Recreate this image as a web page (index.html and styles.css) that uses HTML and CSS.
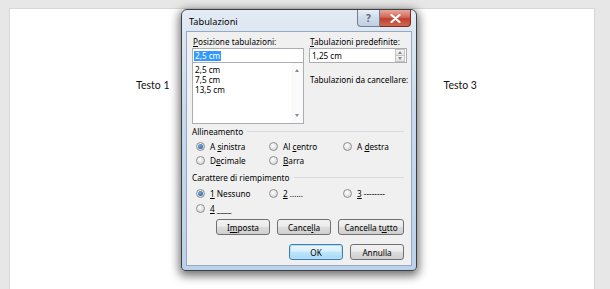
FILE: index.html
```html
<!DOCTYPE html>
<html lang="it">
<head>
    <meta charset="UTF-8">
    <title>Tabulazioni</title>
    <link rel="stylesheet" href="styles.css">
</head>
<body>
    <div class="workspace">
        <div class="page">
            <div class="doc-line">
                <span>Testo 1</span>
                <span>Testo 3</span>
            </div>
        </div>

        <div class="dialog">
            <div class="titlebar">
                <span class="title">Tabulazioni</span>
                <div class="caption-btns">
                    <span class="cap cap-help">?</span>
                    <span class="cap cap-close">
                        <svg width="11" height="9" viewBox="0 0 11 9"><path d="M1.5 1 L9.5 8 M9.5 1 L1.5 8" stroke="#fff" stroke-width="2.2" stroke-linecap="round"/></svg>
                    </span>
                </div>
            </div>

            <div class="client">
                <div class="top">
                    <div class="col-left">
                        <div class="label"><u>P</u>osizione tabulazioni:</div>
                        <div class="textbox"><span class="sel">2,5 cm</span></div>
                        <div class="listbox">
                            <div class="items">
                                <div>2,5 cm</div>
                                <div>7,5 cm</div>
                                <div>13,5 cm</div>
                            </div>
                            <div class="vscroll">
                                <span class="arrow up"></span>
                                <span class="arrow down"></span>
                            </div>
                        </div>
                    </div>
                    <div class="col-right">
                        <div class="label"><u>T</u>abulazioni predefinite:</div>
                        <div class="spin">
                            <span class="spin-value">1,25 cm</span>
                            <div class="spin-btns">
                                <span class="spin-btn"><span class="arrow up"></span></span>
                                <span class="spin-btn"><span class="arrow down"></span></span>
                            </div>
                        </div>
                        <div class="label clear-label">Tabulazioni da cancellare:</div>
                    </div>
                </div>

                <div class="group-head">Allineamento</div>
                <div class="radios">
                    <div class="radio checked"><span class="dot"></span><span>A <u>s</u>inistra</span></div>
                    <div class="radio"><span class="dot"></span><span>Al <u>c</u>entro</span></div>
                    <div class="radio"><span class="dot"></span><span>A <u>d</u>estra</span></div>
                    <div class="radio"><span class="dot"></span><span>D<u>e</u>cimale</span></div>
                    <div class="radio"><span class="dot"></span><span><u>B</u>arra</span></div>
                </div>

                <div class="group-head fill-head">Carattere di riempimento</div>
                <div class="radios fill">
                    <div class="radio checked"><span class="dot"></span><span><u>1</u> Nessuno</span></div>
                    <div class="radio"><span class="dot"></span><span><u>2</u> ......</span></div>
                    <div class="radio"><span class="dot"></span><span><u>3</u> --------</span></div>
                    <div class="radio"><span class="dot"></span><span><u>4</u> ____</span></div>
                </div>

                <div class="btn-row">
                    <span class="btn"><span>I<u>m</u>posta</span></span>
                    <span class="btn"><span>Cance<u>l</u>la</span></span>
                    <span class="btn wide"><span>Cancella t<u>u</u>tto</span></span>
                </div>
                <div class="btn-row last">
                    <span class="btn default">OK</span>
                    <span class="btn">Annulla</span>
                </div>
            </div>
        </div>
    </div>
</body>
</html>
```

FILE: styles.css
```css
body {
    margin: 0;
    background: #e7e7e7;
    font-family: "Noto Sans", sans-serif;
}

.workspace {
    position: relative;
    height: 289px;
    overflow: hidden;
    padding: 9px 0 0 10px;
    box-sizing: border-box;
}

.page {
    width: 584px;
    height: 290px;
    background: #ffffff;
    box-shadow: 0 0 0 1px #d8d8d8;
}

.doc-line {
    display: flex;
    gap: 274px;
    padding: 70px 0 0 126px;
    font-family: Lato, "Noto Sans", sans-serif;
    font-size: 10.5px;
    color: #111;
}

/* dialog window */
.dialog {
    position: absolute;
    left: 181px;
    top: 9px;
    width: 236px;
    height: 262px;
    box-sizing: border-box;
    border: 1px solid #3b4048;
    border-radius: 6px 6px 4px 4px;
    background: linear-gradient(#e3ebf4, #c8d9ec 40%, #bcd2ea);
    box-shadow: 0 3px 10px 2px rgba(0, 0, 0, 0.55);
    padding: 0 4px 4px;
    display: flex;
    flex-direction: column;
    font-size: 8.2px;
    color: #000;
}

.titlebar {
    height: 21px;
    display: flex;
    align-items: flex-start;
}

.title {
    padding: 5px 0 0 3px;
    font-size: 9.2px;
    color: #000;
}

.caption-btns {
    margin-left: auto;
    margin-right: 1px;
    display: flex;
}

.cap {
    height: 17px;
    display: flex;
    align-items: center;
    justify-content: center;
    box-sizing: border-box;
    border: 1px solid #6d7f95;
    border-top: none;
}

.cap-help {
    width: 23px;
    border-radius: 0 0 0 4px;
    background: linear-gradient(#e9eff6, #cfdbe9 50%, #bfcfe2);
    color: #5a6a7e;
    font-size: 10px;
    font-weight: bold;
}

.cap-close {
    width: 31px;
    border-left: none;
    border-color: #7a2b22;
    border-radius: 0 0 4px 0;
    background: linear-gradient(#e9a99b, #d0685a 45%, #bf3f2e 55%, #cf6a52);
}

.client {
    flex: 1;
    background: #f0f0f0;
    border: 1px solid #95a9c3;
    padding: 4px 4px 0 5px;
}

.label {
    height: 11px;
    line-height: 11px;
    padding-left: 1px;
    white-space: nowrap;
}

.top {
    display: flex;
    gap: 5px;
}

.col-left {
    width: 113px;
}

.col-right {
    width: 98px;
}

.textbox,
.spin {
    margin-top: 1px;
    height: 15px;
    box-sizing: border-box;
    border: 1px solid #abadb3;
    background: #fff;
    display: flex;
    align-items: center;
    padding-left: 1px;
}

.sel {
    background: #3399ff;
    color: #fff;
    line-height: 10px;
    padding: 0 1px;
}

.listbox {
    height: 61px;
    box-sizing: border-box;
    border: 1px solid #abadb3;
    border-top: none;
    background: #fff;
    display: flex;
}

.items {
    flex: 1;
    padding: 2px 0 0 2px;
    line-height: 10px;
}

.vscroll {
    width: 12px;
    display: flex;
    flex-direction: column;
    justify-content: space-between;
    align-items: center;
    padding: 6px 0 6px;
    background: #fafafa;
}

.arrow {
    width: 0;
    height: 0;
    border-left: 2.5px solid transparent;
    border-right: 2.5px solid transparent;
}

.arrow.up {
    border-bottom: 3px solid #8a8a8a;
}

.arrow.down {
    border-top: 3px solid #8a8a8a;
}

.spin-value {
    flex: 1;
    padding-left: 1px;
}

.spin-btns {
    width: 10px;
    height: 13px;
    margin-right: 1px;
    display: flex;
    flex-direction: column;
}

.spin-btn {
    flex: 1;
    display: flex;
    align-items: center;
    justify-content: center;
    border: 1px solid #c4c4c4;
    background: linear-gradient(#f6f6f6, #e2e2e2);
}

.spin-btn + .spin-btn {
    border-top: none;
}

.clear-label {
    margin-top: 11px;
}

/* groups */
.group-head {
    margin-top: 2px;
    height: 11px;
    line-height: 11px;
    display: flex;
    align-items: center;
    gap: 4px;
}

.group-head::after {
    content: "";
    flex: 1;
    border-top: 1px solid #d9dde2;
    margin-right: 3px;
}

.fill-head {
    margin-top: 5px;
}

.radios {
    margin-top: 2px;
    padding-left: 4px;
    display: grid;
    grid-template-columns: 73px 74px auto;
    grid-auto-rows: 14px;
}

.radios.fill {
    margin-top: 3px;
    grid-auto-rows: 15px;
}

.radio {
    display: flex;
    align-items: center;
    gap: 5px;
    white-space: nowrap;
}

.dot {
    width: 9px;
    height: 9px;
    box-sizing: border-box;
    border-radius: 50%;
    border: 1px solid #8e8f8f;
    background: radial-gradient(circle at 40% 35%, #ffffff, #dcdcdc 70%, #cfcfcf);
    display: flex;
    align-items: center;
    justify-content: center;
}

.radio.checked .dot::after {
    content: "";
    width: 5px;
    height: 5px;
    border-radius: 50%;
    background: radial-gradient(circle at 40% 35%, #6fa8e0, #1e5a9c);
}

/* push buttons */
.btn-row {
    margin-top: 3px;
    display: flex;
    justify-content: flex-end;
    gap: 7px;
    padding-right: 3px;
}

.btn-row.last {
    margin-top: 9px;
}

.btn {
    width: 54px;
    height: 16px;
    box-sizing: border-box;
    border: 1px solid #707070;
    border-radius: 3px;
    background: linear-gradient(#f2f2f2, #ebebeb 45%, #dddddd 50%, #cfcfcf);
    display: flex;
    align-items: center;
    justify-content: center;
    white-space: nowrap;
}

.btn.wide {
    width: 66px;
}

.btn.default {
    border-color: #3c7fb1;
    box-shadow: inset 0 0 0 1px #b8dcf3;
    background: linear-gradient(#eaf6fd, #d9f0fc 45%, #bee6fd 50%, #a7d9f5);
}
```
